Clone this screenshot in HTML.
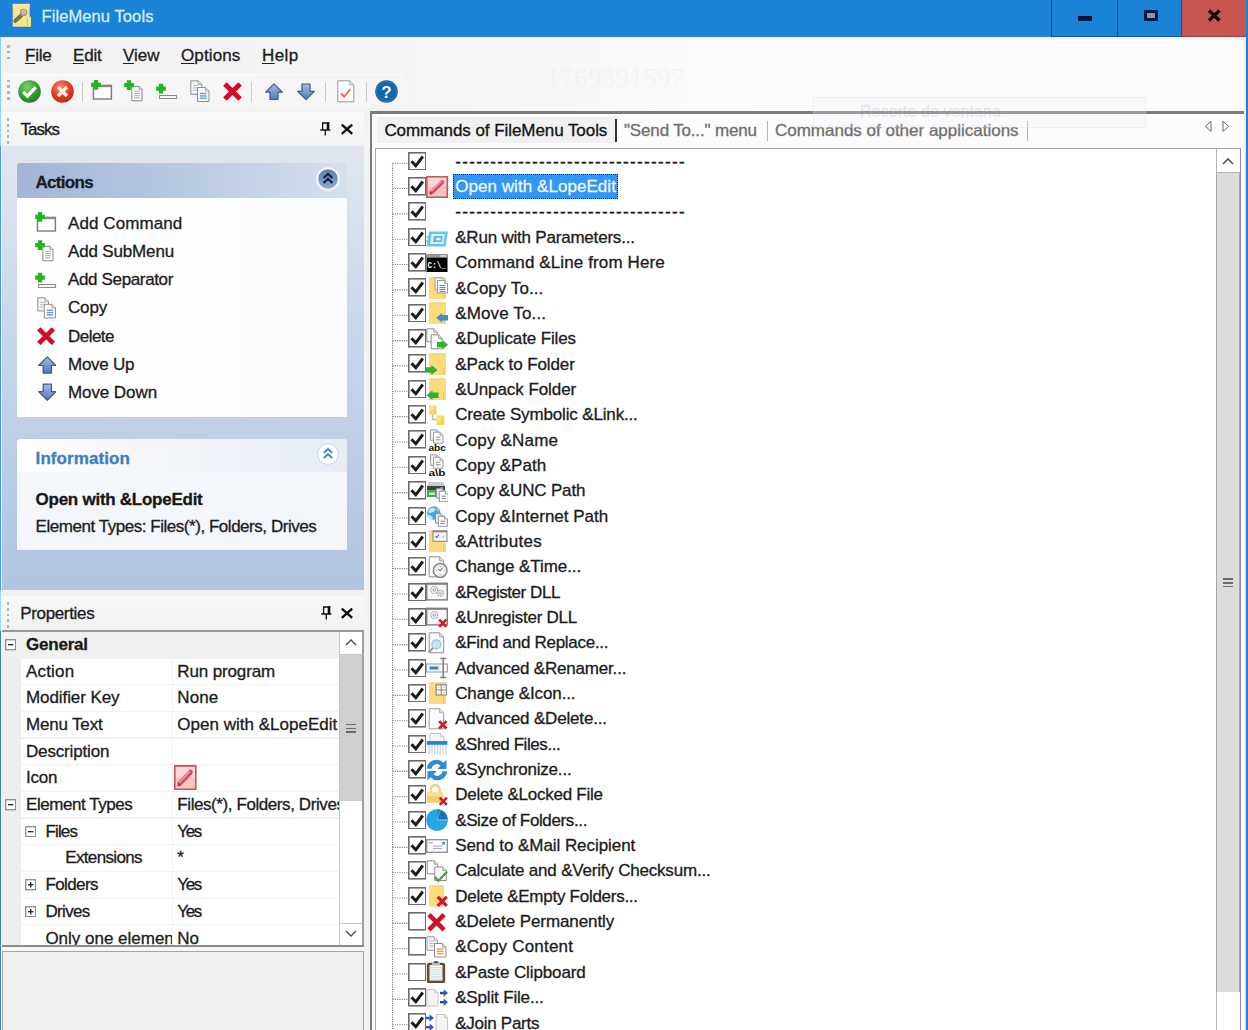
<!DOCTYPE html>
<html><head><meta charset="utf-8"><title>FileMenu Tools</title>
<style>
html,body{margin:0;padding:0;}
body{width:1248px;height:1030px;position:relative;overflow:hidden;background:#f3f3f3;font-family:"Liberation Sans",sans-serif;}
div,span.t,svg{position:absolute;}
span.t{white-space:pre;line-height:24px;height:24px;-webkit-text-stroke:0.3px currentColor;}
u{text-decoration:underline;text-underline-offset:2px;text-decoration-thickness:1.3px;}
</style></head><body>
<div style="left:0px;top:0px;width:1248px;height:37px;background:#1b83d7;"></div>
<div style="left:0px;top:37px;width:1248px;height:76px;background:linear-gradient(90deg,#f1f1f1 0%,#f4f4f4 30%,#fbfbfb 55%,#fcfcfc 100%);"></div>
<div style="left:0px;top:35.8px;width:1051px;height:1.2px;background:#3b82bf;"></div>
<div style="left:0px;top:37px;width:1248px;height:2.6px;background:linear-gradient(180deg,#d6e8f7,#fbfbfb 60%,#f6f6f6);"></div>
<div style="left:3px;top:72.5px;width:402px;height:38.3px;background:linear-gradient(180deg,#fafafa,#f6f6f6 12%,#f5f5f5 85%,#f0f0f0);border-radius:2px;"></div>
<div style="left:0px;top:37px;width:1.3px;height:75px;background:#8ccdf8;"></div>
<div style="left:0px;top:112px;width:1.3px;height:34px;background:#9ad3f9;"></div>
<div style="left:0px;top:145.5px;width:1.3px;height:444px;background:#3f9ae2;"></div>
<div style="left:0px;top:589.5px;width:1.3px;height:41px;background:#a3d6f9;"></div>
<div style="left:0px;top:630.5px;width:1.3px;height:400px;background:#3a85bf;"></div>
<div style="left:1246.2px;top:37px;width:1.8px;height:993px;background:#2382d6;"></div>
<div style="left:1243.7px;top:37px;width:2.5px;height:993px;background:linear-gradient(90deg,#f4f8fc,#cfe4f7);"></div>
<svg style="left:12px;top:3px;" width="20" height="25" viewBox="0 0 20 25" ><rect x="0.700" y="0.900" width="17" height="22.800" fill="#f7e48e"/><rect x="0.700" y="0.900" width="17" height="2" fill="#f1ea9e"/><rect x="1.500" y="3" width="6" height="9" fill="#fbe39a" opacity=".7"/><rect x="15.300" y="13.800" width="3.700" height="9.900" fill="#f3e690"/><rect x="14.900" y="13.800" width="1" height="9.900" fill="#d9c85e"/><path d="M3.400 17.800L9.300 12.400" stroke="#7a7046" stroke-width="4" stroke-linecap="round"/><circle cx="11.600" cy="9.400" r="3.700" fill="#a99a76"/><circle cx="11.900" cy="9.200" r="2.100" fill="#e6d6c6"/><circle cx="11.900" cy="9.300" r=".9" fill="#8a7f78"/></svg>
<span class="t" style="left:41.5px;top:4.40px;font-size:16.5px;letter-spacing:0.095px;color:#d6efff;">FileMenu Tools</span>
<div style="left:1051px;top:0px;width:1px;height:37px;background:#154a7c;"></div>
<div style="left:1117px;top:0px;width:1px;height:37px;background:#154a7c;"></div>
<div style="left:1181px;top:0px;width:1px;height:37px;background:#154a7c;"></div>
<div style="left:1052px;top:36px;width:130px;height:1px;background:#1a5c98;"></div>
<div style="left:1182px;top:0px;width:64px;height:37px;background:#c75650;"></div>
<div style="left:1182px;top:36px;width:64px;height:1px;background:#9c4440;"></div>
<div style="left:1246px;top:0px;width:2px;height:37px;background:#1b83d7;"></div>
<div style="left:1077.5px;top:16px;width:14px;height:4.6px;background:#06133a;"></div>
<div style="left:1143.5px;top:10px;width:14.5px;height:10.6px;background:#5fa6dd;border:3.200px solid #06133a;box-sizing:border-box;"></div>
<svg style="left:1207px;top:9px;" width="15" height="13" viewBox="0 0 15 13" ><path d="M2 1.500L12.500 11.500M12.500 1.500L2 11.500" stroke="#0a0a0a" stroke-width="3.300" fill="none"/></svg>
<div style="left:7.1px;top:44.8px;width:2.8px;height:2.8px;background:#b2b2b2;"></div>
<div style="left:7.1px;top:50.699999999999996px;width:2.8px;height:2.8px;background:#b2b2b2;"></div>
<div style="left:7.1px;top:56.599999999999994px;width:2.8px;height:2.8px;background:#b2b2b2;"></div>
<span class="t" style="left:25px;top:44.00px;font-size:17px;letter-spacing:-0.223px;color:#1b1b1b;"><u>F</u>ile</span>
<span class="t" style="left:73px;top:44.00px;font-size:17px;letter-spacing:-0.199px;color:#1b1b1b;"><u>E</u>dit</span>
<span class="t" style="left:123px;top:44.00px;font-size:17px;letter-spacing:-0.011px;color:#1b1b1b;"><u>V</u>iew</span>
<span class="t" style="left:181px;top:44.00px;font-size:17px;letter-spacing:0.130px;color:#1b1b1b;"><u>O</u>ptions</span>
<span class="t" style="left:262px;top:44.00px;font-size:17px;letter-spacing:0.384px;color:#1b1b1b;"><u>H</u>elp</span>
<span class="t" style="left:546px;top:66.00px;font-size:27px;letter-spacing:0.000px;color:rgba(190,190,190,.10);font-family:'Liberation Serif',serif;letter-spacing:0.4px;">1769391597</span>
<div style="left:7.1px;top:79.6px;width:2.8px;height:2.8px;background:#b2b2b2;"></div>
<div style="left:7.1px;top:85.39999999999999px;width:2.8px;height:2.8px;background:#b2b2b2;"></div>
<div style="left:7.1px;top:91.19999999999999px;width:2.8px;height:2.8px;background:#b2b2b2;"></div>
<div style="left:7.1px;top:97.0px;width:2.8px;height:2.8px;background:#b2b2b2;"></div>
<div style="left:81.5px;top:81.5px;width:1.3px;height:20px;background:#c9c9c9;"></div>
<div style="left:251.2px;top:81.5px;width:1.3px;height:20px;background:#c9c9c9;"></div>
<div style="left:325px;top:81.5px;width:1.3px;height:20px;background:#c9c9c9;"></div>
<div style="left:365.5px;top:81.5px;width:1.3px;height:20px;background:#c9c9c9;"></div>
<svg style="left:18px;top:79.5px;" width="23" height="23" viewBox="0 0 23 23" ><defs><radialGradient id="gg" cx=".4" cy=".3" r=".8"><stop offset="0" stop-color="#7ad66a"/><stop offset=".55" stop-color="#2f9e32"/><stop offset="1" stop-color="#1d7a25"/></radialGradient></defs><circle cx="11.500" cy="11.500" r="11.300" fill="url(#gg)"/><path d="M5.200 11.800l4.300 4.400 8.300-9" stroke="#fff" stroke-width="3.300" fill="none"/></svg>
<svg style="left:50.5px;top:79.5px;" width="23" height="23" viewBox="0 0 23 23" ><defs><radialGradient id="rg" cx=".4" cy=".3" r=".8"><stop offset="0" stop-color="#f58a6a"/><stop offset=".55" stop-color="#df3a1e"/><stop offset="1" stop-color="#b8260f"/></radialGradient></defs><circle cx="11.500" cy="11.500" r="11.300" fill="url(#rg)"/><path d="M7 7l9 9M16 7l-9 9" stroke="#fbe9e4" stroke-width="3.600" fill="none"/></svg>
<svg style="left:91.2px;top:80px;" width="22" height="20" viewBox="0 0 22 20" ><rect x="2.400" y="5.400" width="18" height="13.600" fill="#fdfdfd" stroke="#7b7b7b" stroke-width="1.400"/><rect x="2.400" y="5.400" width="18" height="1.800" fill="#8a8a8a"/><path d="M0.20000000000000018 4.95h9.7M5.05 0.10000000000000053v9.7" stroke="#22b522" stroke-width="4.3" fill="none"/></svg>
<svg style="left:123.8px;top:80.2px;" width="22" height="22" viewBox="0 0 22 22" ><path d="M7.8 6.3h7.199999999999999l3 3v11.5h-10.2z" fill="#fafafa" stroke="#8a8a8a" stroke-width="1"/><path d="M15.0 6.3v3h3" fill="#e4e4ee" stroke="#8a8a8a" stroke-width="0.8"/><path d="M10.2 11.3h5.5" stroke="#a8a8a8" stroke-width="1"/><path d="M10.2 13.5h5.5" stroke="#a8a8a8" stroke-width="1"/><path d="M10.2 15.700000000000001h5.5" stroke="#a8a8a8" stroke-width="1"/><path d="M10.2 17.900000000000002h5.5" stroke="#a8a8a8" stroke-width="1"/><path d="M0.15000000000000036 5.2h9.7M5 0.35000000000000053v9.7" stroke="#22b522" stroke-width="4.3" fill="none"/></svg>
<svg style="left:155.7px;top:83.2px;" width="22" height="17" viewBox="0 0 22 17" ><rect x="3.500" y="12.500" width="17.100" height="3" fill="#f4f4f4" stroke="#8a8a8a" stroke-width="1"/><path d="M0.15000000000000036 5.65h9.7M5 0.8000000000000007v9.7" stroke="#22b522" stroke-width="4.3" fill="none"/></svg>
<svg style="left:190px;top:80px;" width="20" height="23" viewBox="0 0 20 23" ><path d="M0.8 0.8h7.4l3.6 3.6v9.9h-11z" fill="#f4f5f8" stroke="#8d8d8d" stroke-width="1"/><path d="M8.200000000000001 0.8v3.6h3.6" fill="#e4e4ee" stroke="#8d8d8d" stroke-width="0.8"/><path d="M3 5.5h5" stroke="#b4bccb" stroke-width="1"/><path d="M3 7.9h5" stroke="#b4bccb" stroke-width="1"/><path d="M3 10.3h5" stroke="#b4bccb" stroke-width="1"/><path d="M7.5 7.5h7.9l3.6 3.6v10.4h-11.5z" fill="#fdfdfd" stroke="#8d8d8d" stroke-width="1"/><path d="M15.4 7.5v3.6h3.6" fill="#e4e4ee" stroke="#8d8d8d" stroke-width="0.8"/><path d="M10 13.5h6.5" stroke="#5b9bd8" stroke-width="1.4"/><path d="M10 15.9h6.5" stroke="#5b9bd8" stroke-width="1.4"/><path d="M10 18.3h6.5" stroke="#5b9bd8" stroke-width="1.4"/></svg>
<svg style="left:222.5px;top:81.5px;" width="19" height="19" viewBox="0 0 19 19" ><path d="M1.9000000000000004 1.9000000000000004L17.1 17.1M17.1 1.9000000000000004L1.9000000000000004 17.1" stroke="#d20a24" stroke-width="4.9" fill="none"/></svg>
<svg style="left:264.5px;top:82.5px;" width="18" height="18" viewBox="0 0 18 18" ><defs><linearGradient id="ug" x1="0" y1="0" x2="0" y2="1"><stop offset="0" stop-color="#a3bde6"/><stop offset="1" stop-color="#4f79ba"/></linearGradient></defs><path d="M9 0.800l8.400 8.400h-4.400v7.300h-8v-7.300h-4.400z" fill="url(#ug)" stroke="#3d5b8c" stroke-width="1.200" stroke-linejoin="round"/></svg>
<svg style="left:296.8px;top:82.8px;" width="18" height="18" viewBox="0 0 18 18" ><defs><linearGradient id="dg" x1="0" y1="0" x2="0" y2="1"><stop offset="0" stop-color="#a3bde6"/><stop offset="1" stop-color="#4f79ba"/></linearGradient></defs><path d="M9 16.700l8.400-8.400h-4.400v-7.300h-8v7.300h-4.400z" fill="url(#dg)" stroke="#3d5b8c" stroke-width="1.200" stroke-linejoin="round"/></svg>
<svg style="left:337px;top:80px;" width="18" height="23" viewBox="0 0 18 23" ><path d="M0.8 0.8h12l4 4v17h-16z" fill="#fbfbfb" stroke="#9a9a9a" stroke-width="1"/><path d="M12.8 0.8v4h4" fill="#e4e4ee" stroke="#9a9a9a" stroke-width="0.8"/><path d="M4 13.500l3.200 3.200 6-7.500" stroke="#e8643c" stroke-width="1.800" fill="none"/></svg>
<svg style="left:375px;top:79.5px;" width="23" height="23" viewBox="0 0 23 23" ><circle cx="11.500" cy="11.500" r="11.300" fill="#1565ae"/><circle cx="11.500" cy="11.500" r="10" fill="none" stroke="#2a7cc4" stroke-width="1"/><text x="11.500" y="17.500" text-anchor="middle" font-family="Liberation Sans,sans-serif" font-weight="bold" font-size="17" fill="#fff">?</text></svg>
<div style="left:2px;top:112px;width:361.7px;height:33.5px;background:linear-gradient(180deg,#fbfbfb,#f1f2f4);"></div>
<div style="left:6.7px;top:118.2px;width:2.8px;height:2.8px;background:#b2b2b2;"></div>
<div style="left:6.7px;top:123.95px;width:2.8px;height:2.8px;background:#b2b2b2;"></div>
<div style="left:6.7px;top:129.7px;width:2.8px;height:2.8px;background:#b2b2b2;"></div>
<div style="left:6.7px;top:135.45px;width:2.8px;height:2.8px;background:#b2b2b2;"></div>
<div style="left:6.7px;top:141.2px;width:2.8px;height:2.8px;background:#b2b2b2;"></div>
<span class="t" style="left:20.5px;top:117.50px;font-size:17px;letter-spacing:-0.991px;color:#1b1b1b;">Tasks</span>
<svg style="left:320px;top:121.6px;" width="11" height="14" viewBox="0 0 11 14" ><path d="M2 1h7.300M2.600 1v7M8 0.400v7.600M0.300 8h10M5.300 8v5.500" stroke="#0c0c0c" stroke-width="1.300" fill="none"/><path d="M8 0.400v7.600" stroke="#0c0c0c" stroke-width="2.600" fill="none"/></svg>
<svg style="left:341px;top:123.5px;" width="12" height="11" viewBox="0 0 12 11" ><path d="M0.800 0.600L11.200 9.800M11.200 0.600L0.800 9.800" stroke="#0c0c0c" stroke-width="2.300" fill="none"/></svg>
<div style="left:2px;top:145.5px;width:361.7px;height:444px;background:linear-gradient(180deg,#e0e6ee 0%,#d5dfec 22%,#c1d1e8 58%,#b0c5e1 100%);"></div>
<div style="left:16.6px;top:162.7px;width:330.4px;height:35.3px;background:linear-gradient(90deg,#a2b5d8 0%,#b8c9e3 50%,#d6e0ed 100%);border-radius:3px 3px 0 0;"></div>
<span class="t" style="left:35.5px;top:171.30px;font-size:17px;letter-spacing:-0.692px;color:#1c1c1c;font-weight:bold;">Actions</span>
<svg style="left:316.4px;top:166.7px;" width="24" height="24" viewBox="0 0 24 24" ><defs><linearGradient id="cg" x1="0" y1="0" x2="0" y2="1"><stop offset="0" stop-color="#5a7db2"/><stop offset="1" stop-color="#8eaad0"/></linearGradient></defs><circle cx="12" cy="12" r="11.800" fill="#f4f8fd"/><circle cx="12" cy="12" r="9.800" fill="url(#cg)"/><path d="M7.600 11l4.400-4.200 4.400 4.200M7.600 16l4.400-4.200 4.400 4.200" stroke="#0e1a33" stroke-width="1.900" fill="none"/></svg>
<div style="left:16.6px;top:198px;width:330.4px;height:219.3px;background:linear-gradient(90deg,#ffffff,#fbfcfe);"></div>
<span class="t" style="left:68px;top:211.90px;font-size:17px;letter-spacing:0.082px;color:#1b1b1b;">Add Command</span>
<span class="t" style="left:68px;top:240.08px;font-size:17px;letter-spacing:-0.159px;color:#1b1b1b;">Add SubMenu</span>
<span class="t" style="left:68px;top:268.26px;font-size:17px;letter-spacing:-0.356px;color:#1b1b1b;">Add Separator</span>
<span class="t" style="left:68px;top:296.44px;font-size:17px;letter-spacing:-0.172px;color:#1b1b1b;">Copy</span>
<span class="t" style="left:68px;top:324.62px;font-size:17px;letter-spacing:-0.524px;color:#1b1b1b;">Delete</span>
<span class="t" style="left:68px;top:352.80px;font-size:17px;letter-spacing:-0.247px;color:#1b1b1b;">Move Up</span>
<span class="t" style="left:68px;top:380.98px;font-size:17px;letter-spacing:-0.084px;color:#1b1b1b;">Move Down</span>
<svg style="left:35px;top:212px;" width="22" height="20" viewBox="0 0 22 20" ><rect x="2.400" y="5.400" width="18" height="13.600" fill="#fdfdfd" stroke="#7b7b7b" stroke-width="1.400"/><rect x="2.400" y="5.400" width="18" height="1.800" fill="#8a8a8a"/><path d="M0.20000000000000018 4.95h9.7M5.05 0.10000000000000053v9.7" stroke="#22b522" stroke-width="4.3" fill="none"/></svg>
<svg style="left:35px;top:240px;" width="22" height="22" viewBox="0 0 22 22" ><path d="M7.8 6.3h7.199999999999999l3 3v11.5h-10.2z" fill="#fafafa" stroke="#8a8a8a" stroke-width="1"/><path d="M15.0 6.3v3h3" fill="#e4e4ee" stroke="#8a8a8a" stroke-width="0.8"/><path d="M10.2 11.3h5.5" stroke="#a8a8a8" stroke-width="1"/><path d="M10.2 13.5h5.5" stroke="#a8a8a8" stroke-width="1"/><path d="M10.2 15.700000000000001h5.5" stroke="#a8a8a8" stroke-width="1"/><path d="M10.2 17.900000000000002h5.5" stroke="#a8a8a8" stroke-width="1"/><path d="M0.15000000000000036 5.2h9.7M5 0.35000000000000053v9.7" stroke="#22b522" stroke-width="4.3" fill="none"/></svg>
<svg style="left:35px;top:272px;" width="22" height="17" viewBox="0 0 22 17" ><rect x="3.500" y="12.500" width="17.100" height="3" fill="#f4f4f4" stroke="#8a8a8a" stroke-width="1"/><path d="M0.15000000000000036 5.65h9.7M5 0.8000000000000007v9.7" stroke="#22b522" stroke-width="4.3" fill="none"/></svg>
<svg style="left:36.5px;top:297px;" width="19.5" height="22.5" viewBox="0 0 20 23" ><path d="M0.8 0.8h7.4l3.6 3.6v9.9h-11z" fill="#f4f5f8" stroke="#8d8d8d" stroke-width="1"/><path d="M8.200000000000001 0.8v3.6h3.6" fill="#e4e4ee" stroke="#8d8d8d" stroke-width="0.8"/><path d="M3 5.5h5" stroke="#b4bccb" stroke-width="1"/><path d="M3 7.9h5" stroke="#b4bccb" stroke-width="1"/><path d="M3 10.3h5" stroke="#b4bccb" stroke-width="1"/><path d="M7.5 7.5h7.9l3.6 3.6v10.4h-11.5z" fill="#fdfdfd" stroke="#8d8d8d" stroke-width="1"/><path d="M15.4 7.5v3.6h3.6" fill="#e4e4ee" stroke="#8d8d8d" stroke-width="0.8"/><path d="M10 13.5h6.5" stroke="#5b9bd8" stroke-width="1.4"/><path d="M10 15.9h6.5" stroke="#5b9bd8" stroke-width="1.4"/><path d="M10 18.3h6.5" stroke="#5b9bd8" stroke-width="1.4"/></svg>
<svg style="left:37.3px;top:326.8px;" width="18.2" height="18.2" viewBox="0 0 19 19" ><path d="M1.9000000000000004 1.9000000000000004L17.1 17.1M17.1 1.9000000000000004L1.9000000000000004 17.1" stroke="#d20a24" stroke-width="4.9" fill="none"/></svg>
<svg style="left:37.6px;top:356px;" width="18.6" height="18.6" viewBox="0 0 18 18" ><defs><linearGradient id="ug2" x1="0" y1="0" x2="0" y2="1"><stop offset="0" stop-color="#a3bde6"/><stop offset="1" stop-color="#4f79ba"/></linearGradient></defs><path d="M9 0.800l8.400 8.400h-4.400v7.300h-8v-7.300h-4.400z" fill="url(#ug2)" stroke="#3d5b8c" stroke-width="1.200" stroke-linejoin="round"/></svg>
<svg style="left:37.6px;top:383.3px;" width="18.6" height="18.6" viewBox="0 0 18 18" ><defs><linearGradient id="dg2" x1="0" y1="0" x2="0" y2="1"><stop offset="0" stop-color="#a3bde6"/><stop offset="1" stop-color="#4f79ba"/></linearGradient></defs><path d="M9 16.700l8.400-8.400h-4.400v-7.300h-8v7.300h-4.400z" fill="url(#dg2)" stroke="#3d5b8c" stroke-width="1.200" stroke-linejoin="round"/></svg>
<div style="left:16.6px;top:438.8px;width:330.4px;height:34px;background:linear-gradient(90deg,#fdfeff 0%,#f3f6fa 40%,#e7edf5 100%);border-radius:3px 3px 0 0;"></div>
<span class="t" style="left:35.6px;top:447.20px;font-size:17px;letter-spacing:0.082px;color:#3d7fbf;font-weight:bold;">Information</span>
<svg style="left:317.4px;top:442.9px;" width="22" height="22" viewBox="0 0 22 22" ><circle cx="11" cy="11" r="10.300" fill="#fdfeff" stroke="#c9d6e8" stroke-width="1"/><path d="M6.800 10l4.200-4 4.200 4M6.800 15l4.200-4 4.200 4" stroke="#3f82c4" stroke-width="1.800" fill="none"/></svg>
<div style="left:16.6px;top:472.3px;width:330.4px;height:77.5px;background:#f3f6fb;"></div>
<span class="t" style="left:35.6px;top:488.00px;font-size:17px;letter-spacing:-0.262px;color:#161616;font-weight:bold;">Open with &amp;LopeEdit</span>
<span class="t" style="left:35.6px;top:514.80px;font-size:17px;letter-spacing:-0.462px;color:#1b1b1b;">Element Types: Files(*), Folders, Drives</span>
<div style="left:2px;top:589.5px;width:361px;height:6.5px;background:#eef0f3;"></div>
<div style="left:2px;top:596px;width:361px;height:35px;background:linear-gradient(180deg,#f8f8f8,#f1f1f1);"></div>
<div style="left:6.7px;top:602.2px;width:2.8px;height:2.8px;background:#b2b2b2;"></div>
<div style="left:6.7px;top:607.95px;width:2.8px;height:2.8px;background:#b2b2b2;"></div>
<div style="left:6.7px;top:613.7px;width:2.8px;height:2.8px;background:#b2b2b2;"></div>
<div style="left:6.7px;top:619.45px;width:2.8px;height:2.8px;background:#b2b2b2;"></div>
<div style="left:6.7px;top:625.2px;width:2.8px;height:2.8px;background:#b2b2b2;"></div>
<span class="t" style="left:20.2px;top:601.90px;font-size:17px;letter-spacing:-0.338px;color:#1b1b1b;">Properties</span>
<svg style="left:320.7px;top:605.6px;" width="11" height="14" viewBox="0 0 11 14" ><path d="M2 1h7.300M2.600 1v7M8 0.400v7.600M0.300 8h10M5.300 8v5.500" stroke="#0c0c0c" stroke-width="1.300" fill="none"/><path d="M8 0.400v7.600" stroke="#0c0c0c" stroke-width="2.600" fill="none"/></svg>
<svg style="left:341px;top:607.5px;" width="12" height="11" viewBox="0 0 12 11" ><path d="M0.800 0.600L11.200 9.800M11.200 0.600L0.800 9.800" stroke="#0c0c0c" stroke-width="2.300" fill="none"/></svg>
<div style="left:2px;top:630.2px;width:361.5px;height:1.4px;background:#989898;"></div>
<div style="left:2px;top:631.5px;width:336.5px;height:314px;background:#fff;"></div>
<div style="left:2px;top:631.5px;width:19px;height:314px;background:#eeeeee;"></div>
<div style="left:2px;top:631.5px;width:336.5px;height:26.17px;background:#f0f0f0;"></div>
<div style="left:21px;top:657.4699999999999px;width:317.5px;height:1.2px;background:#f2f2f2;"></div>
<div style="left:21px;top:684.14px;width:317.5px;height:1.2px;background:#f2f2f2;"></div>
<div style="left:21px;top:710.81px;width:317.5px;height:1.2px;background:#f2f2f2;"></div>
<div style="left:21px;top:737.48px;width:317.5px;height:1.2px;background:#f2f2f2;"></div>
<div style="left:21px;top:764.15px;width:317.5px;height:1.2px;background:#f2f2f2;"></div>
<div style="left:21px;top:790.8199999999999px;width:317.5px;height:1.2px;background:#f2f2f2;"></div>
<div style="left:21px;top:817.49px;width:317.5px;height:1.2px;background:#f2f2f2;"></div>
<div style="left:21px;top:844.16px;width:317.5px;height:1.2px;background:#f2f2f2;"></div>
<div style="left:21px;top:870.8299999999999px;width:317.5px;height:1.2px;background:#f2f2f2;"></div>
<div style="left:21px;top:897.5px;width:317.5px;height:1.2px;background:#f2f2f2;"></div>
<div style="left:21px;top:924.17px;width:317.5px;height:1.2px;background:#f2f2f2;"></div>
<div style="left:171.5px;top:658.17px;width:1.2px;height:286.83px;background:#f2f2f2;"></div>
<span class="t" style="left:26px;top:633.10px;font-size:17px;letter-spacing:-0.216px;color:#1b1b1b;font-weight:bold;">General</span>
<span class="t" style="left:26px;top:659.77px;font-size:17px;letter-spacing:0.175px;color:#1b1b1b;">Action</span>
<span class="t" style="left:177.3px;top:659.77px;font-size:17px;letter-spacing:-0.138px;color:#1b1b1b;">Run program</span>
<span class="t" style="left:26px;top:686.44px;font-size:17px;letter-spacing:-0.082px;color:#1b1b1b;">Modifier Key</span>
<span class="t" style="left:177.3px;top:686.44px;font-size:17px;letter-spacing:0.090px;color:#1b1b1b;">None</span>
<span class="t" style="left:26px;top:713.11px;font-size:17px;letter-spacing:-0.180px;color:#1b1b1b;">Menu Text</span>
<span class="t" style="left:177.3px;top:713.11px;font-size:17px;letter-spacing:0.015px;color:#1b1b1b;">Open with &amp;LopeEdit</span>
<span class="t" style="left:26px;top:739.78px;font-size:17px;letter-spacing:-0.158px;color:#1b1b1b;">Description</span>
<span class="t" style="left:26px;top:766.45px;font-size:17px;letter-spacing:-0.208px;color:#1b1b1b;">Icon</span>
<span class="t" style="left:26px;top:793.12px;font-size:17px;letter-spacing:-0.449px;color:#1b1b1b;">Element Types</span>
<div style="left:173px;top:791.52px;width:165.500px;height:26.67px;overflow:hidden;">
<span class="t" style="left:4.300000000000011px;top:1.60px;font-size:17px;letter-spacing:-0.415px;color:#1b1b1b;">Files(*), Folders, Drives</span>
</div>
<span class="t" style="left:45.4px;top:819.79px;font-size:17px;letter-spacing:-0.819px;color:#1b1b1b;">Files</span>
<span class="t" style="left:177.3px;top:819.79px;font-size:17px;letter-spacing:-1.345px;color:#1b1b1b;">Yes</span>
<span class="t" style="left:65.2px;top:846.46px;font-size:17px;letter-spacing:-0.636px;color:#1b1b1b;">Extensions</span>
<span class="t" style="left:177.3px;top:846.46px;font-size:17px;letter-spacing:0.085px;color:#1b1b1b;">*</span>
<span class="t" style="left:45.4px;top:873.13px;font-size:17px;letter-spacing:-0.584px;color:#1b1b1b;">Folders</span>
<span class="t" style="left:177.3px;top:873.13px;font-size:17px;letter-spacing:-1.345px;color:#1b1b1b;">Yes</span>
<span class="t" style="left:45.4px;top:899.80px;font-size:17px;letter-spacing:-0.645px;color:#1b1b1b;">Drives</span>
<span class="t" style="left:177.3px;top:899.80px;font-size:17px;letter-spacing:-1.345px;color:#1b1b1b;">Yes</span>
<div style="left:21px;top:924.87px;width:150.500px;height:20.93px;overflow:hidden;">
<span class="t" style="left:24.4px;top:2.60px;font-size:17px;letter-spacing:-0.009px;color:#1b1b1b;">Only one element</span>
</div>
<div style="left:173px;top:924.87px;width:165px;height:20.93px;overflow:hidden;">
<span class="t" style="left:4.300000000000011px;top:2.60px;font-size:17px;letter-spacing:-0.116px;color:#1b1b1b;">No</span>
</div>
<svg style="left:4.999999999999999px;top:639.3px;" width="11.4" height="11.4" viewBox="0 0 11.4 11.4" ><rect x="0.700" y="0.700" width="10" height="10" fill="#fff" stroke="#8a8a8a" stroke-width="1.300"/><path d="M3 5.700h5.400" stroke="#222" stroke-width="1.300"/></svg>
<svg style="left:4.999999999999999px;top:799.3199999999999px;" width="11.4" height="11.4" viewBox="0 0 11.4 11.4" ><rect x="0.700" y="0.700" width="10" height="10" fill="#fff" stroke="#8a8a8a" stroke-width="1.300"/><path d="M3 5.700h5.400" stroke="#222" stroke-width="1.300"/></svg>
<svg style="left:24.7px;top:825.99px;" width="11.4" height="11.4" viewBox="0 0 11.4 11.4" ><rect x="0.700" y="0.700" width="10" height="10" fill="#fff" stroke="#8a8a8a" stroke-width="1.300"/><path d="M3 5.700h5.400" stroke="#222" stroke-width="1.300"/></svg>
<svg style="left:24.7px;top:879.3299999999999px;" width="11.4" height="11.4" viewBox="0 0 11.4 11.4" ><rect x="0.700" y="0.700" width="10" height="10" fill="#fff" stroke="#8a8a8a" stroke-width="1.300"/><path d="M3 5.700h5.400" stroke="#222" stroke-width="1.300"/><path d="M5.700 3v5.400" stroke="#222" stroke-width="1.300"/></svg>
<svg style="left:24.7px;top:906.0px;" width="11.4" height="11.4" viewBox="0 0 11.4 11.4" ><rect x="0.700" y="0.700" width="10" height="10" fill="#fff" stroke="#8a8a8a" stroke-width="1.300"/><path d="M3 5.700h5.400" stroke="#222" stroke-width="1.300"/><path d="M5.700 3v5.400" stroke="#222" stroke-width="1.300"/></svg>
<svg style="left:174.3px;top:765.2px;" width="22.6" height="25.3" viewBox="0 0 22 22" preserveAspectRatio="none"><rect x="0.800" y="0.800" width="20.400" height="20.400" fill="#f7c4c4" stroke="#c4585a" stroke-width="1.600"/><rect x="1.800" y="1.800" width="18.400" height="9" fill="#fbdcdc" opacity="0.750"/><path d="M5.600 16.200L16.200 6.200" stroke="#dc4a62" stroke-width="4.300" stroke-linecap="round"/><path d="M5.600 14.800L15 6" stroke="#f29aa6" stroke-width="1.500" stroke-linecap="round"/><path d="M3.200 18.800l1.200-3.200 2.200 2.200z" fill="#8c3848"/></svg>
<div style="left:338.5px;top:631.5px;width:25px;height:314px;background:#fff;"></div>
<div style="left:339.3px;top:631.5px;width:1.2px;height:314px;background:#c4c4c4;"></div>
<div style="left:361.9px;top:631.5px;width:1.7px;height:314px;background:#9e9e9e;"></div>
<div style="left:339.3px;top:654.3px;width:24px;height:1.1px;background:#c4c4c4;"></div>
<div style="left:339.3px;top:922.8px;width:24px;height:1.1px;background:#c4c4c4;"></div>
<div style="left:339.5px;top:655px;width:23px;height:146.3px;background:#cfcfcf;border-right:1.300px solid #a6a6a6;box-sizing:border-box;"></div>
<svg style="left:343px;top:636px;" width="16" height="12" viewBox="0 0 16 12" ><path d="M3 9l5-5 5 5" stroke="#555" stroke-width="1.500" fill="none"/></svg>
<svg style="left:343px;top:928px;" width="16" height="12" viewBox="0 0 16 12" ><path d="M3 3l5 5 5-5" stroke="#555" stroke-width="1.500" fill="none"/></svg>
<div style="left:346px;top:723.7px;width:9.5px;height:1.6px;background:#6a6a6a;"></div>
<div style="left:346px;top:727.5px;width:9.5px;height:1.6px;background:#6a6a6a;"></div>
<div style="left:346px;top:731.3000000000001px;width:9.5px;height:1.6px;background:#6a6a6a;"></div>
<div style="left:2px;top:945px;width:361.5px;height:1.5px;background:#8c8c8c;"></div>
<div style="left:2px;top:946.5px;width:361.5px;height:4.8px;background:#f6f6f6;"></div>
<div style="left:2px;top:951.3px;width:361.7px;height:80px;background:#f0f0f0;border:1.500px solid #a6a6a6;box-sizing:border-box;"></div>
<div style="left:363.5px;top:112px;width:7.5px;height:918px;background:#f2f3f5;"></div>
<div style="left:371px;top:112px;width:873px;height:918px;background:#fcfcfc;"></div>
<div style="left:370.2px;top:111.3px;width:873.5px;height:2.5px;background:#7c7c7c;"></div>
<div style="left:370.2px;top:111.3px;width:2.3px;height:919px;background:#7c7c7c;"></div>
<div style="left:377px;top:117px;width:238.5px;height:26px;background:#f1f1f1;"></div>
<span class="t" style="left:384.4px;top:118.50px;font-size:17px;letter-spacing:-0.064px;color:#111;">Commands of FileMenu Tools</span>
<div style="left:615.3px;top:118.5px;width:1.6px;height:23px;background:#333;"></div>
<span class="t" style="left:624px;top:118.50px;font-size:17px;letter-spacing:-0.163px;color:#6e6e6e;">&quot;Send To...&quot; menu</span>
<div style="left:766.5px;top:120.5px;width:1.2px;height:20px;background:#b5b5b5;"></div>
<span class="t" style="left:775px;top:118.50px;font-size:17px;letter-spacing:-0.007px;color:#6e6e6e;">Commands of other applications</span>
<div style="left:1026.5px;top:120.5px;width:1.2px;height:20px;background:#b5b5b5;"></div>
<svg style="left:1201.5px;top:120.2px;" width="30" height="13" viewBox="0 0 30 13" ><path d="M9 1.200v10.200l-5.600-5.100z" fill="#fff" stroke="#6a6a6a" stroke-width="1"/><path d="M21 1.200v10.200l5.600-5.100z" fill="#fff" stroke="#6a6a6a" stroke-width="1"/></svg>
<div style="left:813px;top:97px;width:333px;height:31px;border:1px solid rgba(170,200,225,.16);background:rgba(235,245,252,.25);box-sizing:border-box;"></div>
<span class="t" style="left:860px;top:100.00px;font-size:16px;letter-spacing:0.075px;color:rgba(120,120,120,.14);">Recorte de ventana</span>
<div style="left:375.2px;top:148px;width:866px;height:885px;background:#fff;border:1.500px solid #a8a8a8;box-sizing:border-box;"></div>
<div style="left:1215.6px;top:149px;width:24px;height:881px;background:#fff;"></div>
<div style="left:1215.6px;top:149px;width:1.3px;height:881px;background:#b5b5b5;"></div>
<div style="left:1215.6px;top:172.3px;width:24px;height:1.2px;background:#b5b5b5;"></div>
<div style="left:1215.6px;top:173px;width:24px;height:818.5px;background:#dcdcdc;border-left:1.400px solid #a9a9a9;border-right:1.400px solid #a9a9a9;box-sizing:border-box;"></div>
<svg style="left:1219.6px;top:155px;" width="16" height="12" viewBox="0 0 16 12" ><path d="M3 9l5-5 5 5" stroke="#555" stroke-width="1.600" fill="none"/></svg>
<div style="left:1222.5px;top:578.3px;width:10px;height:1.6px;background:#6a6a6a;"></div>
<div style="left:1222.5px;top:582.0px;width:10px;height:1.6px;background:#6a6a6a;"></div>
<div style="left:1222.5px;top:585.6999999999999px;width:10px;height:1.6px;background:#6a6a6a;"></div>
<div style="left:1239.6px;top:149px;width:1.4px;height:881px;background:#8e8e8e;"></div>
<svg style="left:388px;top:161.15px" width="22" height="868.85" viewBox="0 0 22 868.85"><path d="M4.500 2.200V868.85" stroke="#787878" stroke-width="1.100" stroke-dasharray="1.100 1.200" fill="none"/><path d="M4.500 2.20H20" stroke="#787878" stroke-width="1.100" stroke-dasharray="1.100 1.200" fill="none"/><path d="M4.500 27.54H20" stroke="#787878" stroke-width="1.100" stroke-dasharray="1.100 1.200" fill="none"/><path d="M4.500 52.88H20" stroke="#787878" stroke-width="1.100" stroke-dasharray="1.100 1.200" fill="none"/><path d="M4.500 78.22H20" stroke="#787878" stroke-width="1.100" stroke-dasharray="1.100 1.200" fill="none"/><path d="M4.500 103.56H20" stroke="#787878" stroke-width="1.100" stroke-dasharray="1.100 1.200" fill="none"/><path d="M4.500 128.90H20" stroke="#787878" stroke-width="1.100" stroke-dasharray="1.100 1.200" fill="none"/><path d="M4.500 154.24H20" stroke="#787878" stroke-width="1.100" stroke-dasharray="1.100 1.200" fill="none"/><path d="M4.500 179.58H20" stroke="#787878" stroke-width="1.100" stroke-dasharray="1.100 1.200" fill="none"/><path d="M4.500 204.92H20" stroke="#787878" stroke-width="1.100" stroke-dasharray="1.100 1.200" fill="none"/><path d="M4.500 230.26H20" stroke="#787878" stroke-width="1.100" stroke-dasharray="1.100 1.200" fill="none"/><path d="M4.500 255.60H20" stroke="#787878" stroke-width="1.100" stroke-dasharray="1.100 1.200" fill="none"/><path d="M4.500 280.94H20" stroke="#787878" stroke-width="1.100" stroke-dasharray="1.100 1.200" fill="none"/><path d="M4.500 306.28H20" stroke="#787878" stroke-width="1.100" stroke-dasharray="1.100 1.200" fill="none"/><path d="M4.500 331.62H20" stroke="#787878" stroke-width="1.100" stroke-dasharray="1.100 1.200" fill="none"/><path d="M4.500 356.96H20" stroke="#787878" stroke-width="1.100" stroke-dasharray="1.100 1.200" fill="none"/><path d="M4.500 382.30H20" stroke="#787878" stroke-width="1.100" stroke-dasharray="1.100 1.200" fill="none"/><path d="M4.500 407.64H20" stroke="#787878" stroke-width="1.100" stroke-dasharray="1.100 1.200" fill="none"/><path d="M4.500 432.98H20" stroke="#787878" stroke-width="1.100" stroke-dasharray="1.100 1.200" fill="none"/><path d="M4.500 458.32H20" stroke="#787878" stroke-width="1.100" stroke-dasharray="1.100 1.200" fill="none"/><path d="M4.500 483.66H20" stroke="#787878" stroke-width="1.100" stroke-dasharray="1.100 1.200" fill="none"/><path d="M4.500 509.00H20" stroke="#787878" stroke-width="1.100" stroke-dasharray="1.100 1.200" fill="none"/><path d="M4.500 534.34H20" stroke="#787878" stroke-width="1.100" stroke-dasharray="1.100 1.200" fill="none"/><path d="M4.500 559.68H20" stroke="#787878" stroke-width="1.100" stroke-dasharray="1.100 1.200" fill="none"/><path d="M4.500 585.02H20" stroke="#787878" stroke-width="1.100" stroke-dasharray="1.100 1.200" fill="none"/><path d="M4.500 610.36H20" stroke="#787878" stroke-width="1.100" stroke-dasharray="1.100 1.200" fill="none"/><path d="M4.500 635.70H20" stroke="#787878" stroke-width="1.100" stroke-dasharray="1.100 1.200" fill="none"/><path d="M4.500 661.04H20" stroke="#787878" stroke-width="1.100" stroke-dasharray="1.100 1.200" fill="none"/><path d="M4.500 686.38H20" stroke="#787878" stroke-width="1.100" stroke-dasharray="1.100 1.200" fill="none"/><path d="M4.500 711.72H20" stroke="#787878" stroke-width="1.100" stroke-dasharray="1.100 1.200" fill="none"/><path d="M4.500 737.06H20" stroke="#787878" stroke-width="1.100" stroke-dasharray="1.100 1.200" fill="none"/><path d="M4.500 762.40H20" stroke="#787878" stroke-width="1.100" stroke-dasharray="1.100 1.200" fill="none"/><path d="M4.500 787.74H20" stroke="#787878" stroke-width="1.100" stroke-dasharray="1.100 1.200" fill="none"/><path d="M4.500 813.08H20" stroke="#787878" stroke-width="1.100" stroke-dasharray="1.100 1.200" fill="none"/><path d="M4.500 838.42H20" stroke="#787878" stroke-width="1.100" stroke-dasharray="1.100 1.200" fill="none"/><path d="M4.500 863.76H20" stroke="#787878" stroke-width="1.100" stroke-dasharray="1.100 1.200" fill="none"/></svg>
<svg style="left:407.6px;top:151.75px;" width="18.6" height="18.6" viewBox="0 0 18.6 18.6" ><rect x="0.800" y="0.800" width="17" height="17" fill="#fff" stroke="#6c6c6c" stroke-width="1.600"/><path d="M3.500 9.300L7.800 13.800L14.800 4.500" stroke="#1c1c1c" stroke-width="3" fill="none"/></svg>
<span class="t" style="left:455.2px;top:149.75px;font-size:17px;letter-spacing:1.332px;color:#1b1b1b;">---------------------------------</span>
<svg style="left:407.6px;top:177.09px;" width="18.6" height="18.6" viewBox="0 0 18.6 18.6" ><rect x="0.800" y="0.800" width="17" height="17" fill="#fff" stroke="#6c6c6c" stroke-width="1.600"/><path d="M3.500 9.300L7.800 13.800L14.800 4.500" stroke="#1c1c1c" stroke-width="3" fill="none"/></svg>
<svg style="left:426px;top:175.69px;" width="22" height="22" viewBox="0 0 22 22" ><rect x="0.800" y="0.800" width="20.400" height="20.400" fill="#f7c4c4" stroke="#c4585a" stroke-width="1.600"/><rect x="1.800" y="1.800" width="18.400" height="9" fill="#fbdcdc" opacity="0.750"/><path d="M5.600 16.200L16.200 6.200" stroke="#dc4a62" stroke-width="4.300" stroke-linecap="round"/><path d="M5.600 14.800L15 6" stroke="#f29aa6" stroke-width="1.500" stroke-linecap="round"/><path d="M3.200 18.800l1.200-3.200 2.200 2.200z" fill="#8c3848"/></svg>
<div style="left:452.6px;top:174.19px;width:165.6px;height:25.2px;background:#3396f5;border:1.300px dotted #0d2d52;box-sizing:border-box;"></div>
<span class="t" style="left:455.2px;top:175.29px;font-size:17px;letter-spacing:0.057px;color:#eef7ff;">Open with &amp;LopeEdit</span>
<svg style="left:407.6px;top:202.43px;" width="18.6" height="18.6" viewBox="0 0 18.6 18.6" ><rect x="0.800" y="0.800" width="17" height="17" fill="#fff" stroke="#6c6c6c" stroke-width="1.600"/><path d="M3.500 9.300L7.800 13.800L14.800 4.500" stroke="#1c1c1c" stroke-width="3" fill="none"/></svg>
<span class="t" style="left:455.2px;top:200.43px;font-size:17px;letter-spacing:1.332px;color:#1b1b1b;">---------------------------------</span>
<svg style="left:407.6px;top:227.77px;" width="18.6" height="18.6" viewBox="0 0 18.6 18.6" ><rect x="0.800" y="0.800" width="17" height="17" fill="#fff" stroke="#6c6c6c" stroke-width="1.600"/><path d="M3.500 9.300L7.800 13.800L14.800 4.500" stroke="#1c1c1c" stroke-width="3" fill="none"/></svg>
<svg style="left:426px;top:226.37px;" width="22" height="22" viewBox="0 0 22 22" ><path d="M3 5.5h19l-2.5 15h-19z" fill="#6dc3f0"/><path d="M5.6 8h13.3l-1.6 10h-13.3z" fill="#d9f1fc"/><path d="M8 10h8.8l-1 6h-8.8z" fill="#5ab5ea"/><path d="M10.4 11.8h4.4l-0.4 2.4h-4.4z" fill="#e8f7fe"/><path d="M0.5 10.5l2 .3-.3 1.6M0 15l2 .3-.3 1.6" stroke="#6dc3f0" stroke-width="1.3" fill="none"/></svg>
<span class="t" style="left:455.2px;top:225.97px;font-size:17px;letter-spacing:-0.206px;color:#1b1b1b;">&amp;Run with Parameters...</span>
<svg style="left:407.6px;top:253.10999999999999px;" width="18.6" height="18.6" viewBox="0 0 18.6 18.6" ><rect x="0.800" y="0.800" width="17" height="17" fill="#fff" stroke="#6c6c6c" stroke-width="1.600"/><path d="M3.500 9.300L7.800 13.800L14.800 4.500" stroke="#1c1c1c" stroke-width="3" fill="none"/></svg>
<svg style="left:426px;top:251.70999999999998px;" width="22" height="22" viewBox="0 0 22 22" ><rect x="0.5" y="2.5" width="21" height="17.5" fill="#000"/><rect x="0.5" y="2.5" width="21" height="3.2" fill="#9c9c9c"/><rect x="14" y="3.2" width="6.5" height="1.6" fill="#d8d8d8"/><text x="1.6" y="16" font-family="Liberation Mono,monospace" font-weight="bold" font-size="9.4" fill="#fff" textLength="18.5" lengthAdjust="spacingAndGlyphs">C:\_</text></svg>
<span class="t" style="left:455.2px;top:251.31px;font-size:17px;letter-spacing:0.121px;color:#1b1b1b;">Command &amp;Line from Here</span>
<svg style="left:407.6px;top:278.45000000000005px;" width="18.6" height="18.6" viewBox="0 0 18.6 18.6" ><rect x="0.800" y="0.800" width="17" height="17" fill="#fff" stroke="#6c6c6c" stroke-width="1.600"/><path d="M3.500 9.300L7.800 13.800L14.800 4.500" stroke="#1c1c1c" stroke-width="3" fill="none"/></svg>
<svg style="left:426px;top:277.05px;" width="22" height="22" viewBox="0 0 22 22" ><rect x="3" y="0.5" width="17" height="21.5" fill="#fbdb7b"/><rect x="17" y="13.83" width="1.4" height="8.17" fill="#f3c85a"/><rect x="3" y="0.5" width="17" height="1" fill="#f6cf63"/><path d="M9 0.8h7l3 3v9h-10z" fill="#f4f6fa" stroke="#9a9a9a" stroke-width="1"/><path d="M16 0.8v3h3" fill="#e4e4ee" stroke="#9a9a9a" stroke-width="0.8"/><path d="M11.5 3.5h7l3 3v9.5h-10z" fill="#fbfcff" stroke="#8e98a8" stroke-width="1"/><path d="M18.5 3.5v3h3" fill="#e4e4ee" stroke="#8e98a8" stroke-width="0.8"/><path d="M13.5 8.5h6" stroke="#5c86c4" stroke-width="1.1"/><path d="M13.5 10.5h6" stroke="#5c86c4" stroke-width="1.1"/><path d="M13.5 12.5h6" stroke="#5c86c4" stroke-width="1.1"/><path d="M13.5 14.5h6" stroke="#5c86c4" stroke-width="1.1"/></svg>
<span class="t" style="left:455.2px;top:276.65px;font-size:17px;letter-spacing:0.039px;color:#1b1b1b;">&amp;Copy To...</span>
<svg style="left:407.6px;top:303.79px;" width="18.6" height="18.6" viewBox="0 0 18.6 18.6" ><rect x="0.800" y="0.800" width="17" height="17" fill="#fff" stroke="#6c6c6c" stroke-width="1.600"/><path d="M3.500 9.300L7.800 13.800L14.800 4.500" stroke="#1c1c1c" stroke-width="3" fill="none"/></svg>
<svg style="left:426px;top:302.39px;" width="22" height="22" viewBox="0 0 22 22" ><rect x="3" y="0.5" width="17" height="21.5" fill="#fbdb7b"/><rect x="17" y="13.83" width="1.4" height="8.17" fill="#f3c85a"/><rect x="3" y="0.5" width="17" height="1" fill="#f6cf63"/><path d="M22 13.09h-6.0v-2.09l-6.0 4.75l6.0 4.75v-2.09h6.0z" fill="#3f8fd0"/></svg>
<span class="t" style="left:455.2px;top:301.99px;font-size:17px;letter-spacing:0.141px;color:#1b1b1b;">&amp;Move To...</span>
<svg style="left:407.6px;top:329.13px;" width="18.6" height="18.6" viewBox="0 0 18.6 18.6" ><rect x="0.800" y="0.800" width="17" height="17" fill="#fff" stroke="#6c6c6c" stroke-width="1.600"/><path d="M3.500 9.300L7.800 13.800L14.800 4.500" stroke="#1c1c1c" stroke-width="3" fill="none"/></svg>
<svg style="left:426px;top:327.72999999999996px;" width="22" height="22" viewBox="0 0 22 22" ><path d="M0.8 0.8h7.1l3.4 3.4v9.6h-10.5z" fill="#fafafa" stroke="#8d8d8d" stroke-width="1"/><path d="M7.9 0.8v3.4h3.4" fill="#e4e4ee" stroke="#8d8d8d" stroke-width="0.8"/><path d="M5.2 6.8h7.4l3.6 3.6v10.4h-11z" fill="#fdfdfd" stroke="#8d8d8d" stroke-width="1"/><path d="M12.6 6.8v3.6h3.6" fill="#e4e4ee" stroke="#8d8d8d" stroke-width="0.8"/><path d="M11 14.09h5.5v-2.09l5.5 4.75l-5.5 4.75v-2.09h-5.5z" fill="#2fb02f"/></svg>
<span class="t" style="left:455.2px;top:327.33px;font-size:17px;letter-spacing:-0.133px;color:#1b1b1b;">&amp;Duplicate Files</span>
<svg style="left:407.6px;top:354.47px;" width="18.6" height="18.6" viewBox="0 0 18.6 18.6" ><rect x="0.800" y="0.800" width="17" height="17" fill="#fff" stroke="#6c6c6c" stroke-width="1.600"/><path d="M3.500 9.300L7.800 13.800L14.800 4.500" stroke="#1c1c1c" stroke-width="3" fill="none"/></svg>
<svg style="left:426px;top:353.07px;" width="22" height="22" viewBox="0 0 22 22" ><rect x="3" y="0.5" width="17" height="21.5" fill="#fbdb7b"/><rect x="17" y="13.83" width="1.4" height="8.17" fill="#f3c85a"/><rect x="3" y="0.5" width="17" height="1" fill="#f6cf63"/><path d="M-1 14.2h6.25v-2.1999999999999997l6.25 5.0l-6.25 5.0v-2.1999999999999997h-6.25z" fill="#2fb02f"/></svg>
<span class="t" style="left:455.2px;top:352.67px;font-size:17px;letter-spacing:-0.090px;color:#1b1b1b;">&amp;Pack to Folder</span>
<svg style="left:407.6px;top:379.81000000000006px;" width="18.6" height="18.6" viewBox="0 0 18.6 18.6" ><rect x="0.800" y="0.800" width="17" height="17" fill="#fff" stroke="#6c6c6c" stroke-width="1.600"/><path d="M3.500 9.300L7.800 13.800L14.800 4.500" stroke="#1c1c1c" stroke-width="3" fill="none"/></svg>
<svg style="left:426px;top:378.41px;" width="22" height="22" viewBox="0 0 22 22" ><rect x="3" y="0.5" width="17" height="21.5" fill="#fbdb7b"/><rect x="17" y="13.83" width="1.4" height="8.17" fill="#f3c85a"/><rect x="3" y="0.5" width="17" height="1" fill="#f6cf63"/><path d="M12.5 14.456000000000003h-6.0v-2.1559999999999997l-6.0 4.9l6.0 4.9v-2.1559999999999997h6.0z" fill="#2fb02f"/></svg>
<span class="t" style="left:455.2px;top:378.01px;font-size:17px;letter-spacing:-0.064px;color:#1b1b1b;">&amp;Unpack Folder</span>
<svg style="left:407.6px;top:405.15000000000003px;" width="18.6" height="18.6" viewBox="0 0 18.6 18.6" ><rect x="0.800" y="0.800" width="17" height="17" fill="#fff" stroke="#6c6c6c" stroke-width="1.600"/><path d="M3.500 9.300L7.800 13.800L14.800 4.500" stroke="#1c1c1c" stroke-width="3" fill="none"/></svg>
<svg style="left:426px;top:403.75px;" width="22" height="22" viewBox="0 0 22 22" ><path d="M6.5 9v6.5h5" stroke="#b9b9b9" stroke-width="1.4" fill="none"/><rect x="3" y="1.5" width="7.5" height="9" fill="#f5d66a"/><rect x="3" y="1.5" width="4" height="5" fill="#f9e18d"/><rect x="8.2" y="6" width="1.2" height="4.5" fill="#eec650"/><rect x="10.5" y="11.5" width="8" height="9.5" fill="#f0dc62"/><rect x="10.5" y="11.5" width="4" height="5" fill="#f6e88a"/><rect x="15.8" y="16" width="1.2" height="5" fill="#e3c84a"/></svg>
<span class="t" style="left:455.2px;top:403.35px;font-size:17px;letter-spacing:-0.151px;color:#1b1b1b;">Create Symbolic &amp;Link...</span>
<svg style="left:407.6px;top:430.49px;" width="18.6" height="18.6" viewBox="0 0 18.6 18.6" ><rect x="0.800" y="0.800" width="17" height="17" fill="#fff" stroke="#6c6c6c" stroke-width="1.600"/><path d="M3.500 9.300L7.800 13.800L14.800 4.500" stroke="#1c1c1c" stroke-width="3" fill="none"/></svg>
<svg style="left:426px;top:429.09px;" width="22" height="22" viewBox="0 0 22 22" ><path d="M4.5 0.8h6l3 3v7.5h-9z" fill="#f2f2f2" stroke="#9c9c9c" stroke-width="1"/><path d="M10.5 0.8v3h3" fill="#e4e4ee" stroke="#9c9c9c" stroke-width="0.8"/><path d="M7.5 3.2h6.5l3 3v8h-9.5z" fill="#fbfbfb" stroke="#9c9c9c" stroke-width="1"/><path d="M14.0 3.2v3h3" fill="#e4e4ee" stroke="#9c9c9c" stroke-width="0.8"/><path d="M10 8.2h4.5" stroke="#8c8c8c" stroke-width="1"/><path d="M10 10.799999999999999h4.5" stroke="#8c8c8c" stroke-width="1"/><text x="2.4" y="21.6" font-family="Liberation Sans,sans-serif" font-weight="bold" font-size="8.6" fill="#111" textLength="17.5" lengthAdjust="spacingAndGlyphs">abc</text></svg>
<span class="t" style="left:455.2px;top:428.69px;font-size:17px;letter-spacing:0.190px;color:#1b1b1b;">Copy &amp;Name</span>
<svg style="left:407.6px;top:455.83000000000004px;" width="18.6" height="18.6" viewBox="0 0 18.6 18.6" ><rect x="0.800" y="0.800" width="17" height="17" fill="#fff" stroke="#6c6c6c" stroke-width="1.600"/><path d="M3.500 9.300L7.800 13.800L14.800 4.500" stroke="#1c1c1c" stroke-width="3" fill="none"/></svg>
<svg style="left:426px;top:454.43px;" width="22" height="22" viewBox="0 0 22 22" ><path d="M4.5 0.8h6l3 3v7.5h-9z" fill="#f2f2f2" stroke="#9c9c9c" stroke-width="1"/><path d="M10.5 0.8v3h3" fill="#e4e4ee" stroke="#9c9c9c" stroke-width="0.8"/><path d="M7.5 3.2h6.5l3 3v8h-9.5z" fill="#fbfbfb" stroke="#9c9c9c" stroke-width="1"/><path d="M14.0 3.2v3h3" fill="#e4e4ee" stroke="#9c9c9c" stroke-width="0.8"/><path d="M10 8.2h4.5" stroke="#8c8c8c" stroke-width="1"/><path d="M10 10.799999999999999h4.5" stroke="#8c8c8c" stroke-width="1"/><text x="2.4" y="21.6" font-family="Liberation Sans,sans-serif" font-weight="bold" font-size="8.6" fill="#111" textLength="17" lengthAdjust="spacingAndGlyphs">a\b</text></svg>
<span class="t" style="left:455.2px;top:454.03px;font-size:17px;letter-spacing:0.028px;color:#1b1b1b;">Copy &amp;Path</span>
<svg style="left:407.6px;top:481.1700000000001px;" width="18.6" height="18.6" viewBox="0 0 18.6 18.6" ><rect x="0.800" y="0.800" width="17" height="17" fill="#fff" stroke="#6c6c6c" stroke-width="1.600"/><path d="M3.500 9.300L7.800 13.800L14.800 4.500" stroke="#1c1c1c" stroke-width="3" fill="none"/></svg>
<svg style="left:426px;top:479.77000000000004px;" width="22" height="22" viewBox="0 0 22 22" ><path d="M3 2h14l2 4h-18z" fill="#c9cbcb"/><rect x="1" y="6" width="18" height="4.5" fill="#3d4344"/><rect x="1" y="10.5" width="18" height="6.5" fill="#3ea94b"/><rect x="3" y="12.4" width="6" height="2.6" fill="#b9f0bf"/><rect x="14.5" y="7.3" width="2.4" height="1.6" fill="#7be07d"/><path d="M10.5 8.6h5.4l2.6 2.6v6.9h-8z" fill="#eef0f4" stroke="#8c8f96" stroke-width="1"/><path d="M15.9 8.6v2.6h2.6" fill="#e4e4ee" stroke="#8c8f96" stroke-width="0.8"/><path d="M13.3 11.2h6.2l2.8 2.8v7.7h-9z" fill="#fafbfd" stroke="#8c8f96" stroke-width="1"/><path d="M19.5 11.2v2.8h2.8" fill="#e4e4ee" stroke="#8c8f96" stroke-width="0.8"/><path d="M15.5 16.2h4.6" stroke="#80889a" stroke-width="1"/><path d="M15.5 18.599999999999998h4.6" stroke="#80889a" stroke-width="1"/></svg>
<span class="t" style="left:455.2px;top:479.37px;font-size:17px;letter-spacing:-0.155px;color:#1b1b1b;">Copy &amp;UNC Path</span>
<svg style="left:407.6px;top:506.51px;" width="18.6" height="18.6" viewBox="0 0 18.6 18.6" ><rect x="0.800" y="0.800" width="17" height="17" fill="#fff" stroke="#6c6c6c" stroke-width="1.600"/><path d="M3.500 9.300L7.800 13.800L14.800 4.500" stroke="#1c1c1c" stroke-width="3" fill="none"/></svg>
<svg style="left:426px;top:505.10999999999996px;" width="22" height="22" viewBox="0 0 22 22" ><circle cx="7.800" cy="8" r="6.800" fill="#4aa5dc"/><path d="M3.500 4c2-1.500 4.500-1.600 5.500 0s-1.500 2.800-3.300 3.600-3.400 .4-3.400-1.200z" fill="#c6e8f8"/><path d="M2 9.500c1.500 .2 3.500 1.500 4.500 3s-.5 2.300-1.500 2c-1.800-.8-3-2.800-3-5z" fill="#bfe6f6"/><path d="M10 2.500c1.500 .5 3 1.800 3.500 3.500l-2.500 .5z" fill="#8fcdf0"/><path d="M9.5 8.6h5.4l2.6 2.6v6.9h-8z" fill="#eef0f4" stroke="#8c8f96" stroke-width="1"/><path d="M14.9 8.6v2.6h2.6" fill="#e4e4ee" stroke="#8c8f96" stroke-width="0.8"/><path d="M12.3 11.2h6.2l2.8 2.8v7.7h-9z" fill="#fafbfd" stroke="#8c8f96" stroke-width="1"/><path d="M18.5 11.2v2.8h2.8" fill="#e4e4ee" stroke="#8c8f96" stroke-width="0.8"/><path d="M14.5 16.2h4.6" stroke="#80889a" stroke-width="1"/><path d="M14.5 18.599999999999998h4.6" stroke="#80889a" stroke-width="1"/></svg>
<span class="t" style="left:455.2px;top:504.71px;font-size:17px;letter-spacing:-0.005px;color:#1b1b1b;">Copy &amp;Internet Path</span>
<svg style="left:407.6px;top:531.85px;" width="18.6" height="18.6" viewBox="0 0 18.6 18.6" ><rect x="0.800" y="0.800" width="17" height="17" fill="#fff" stroke="#6c6c6c" stroke-width="1.600"/><path d="M3.500 9.300L7.800 13.800L14.800 4.500" stroke="#1c1c1c" stroke-width="3" fill="none"/></svg>
<svg style="left:426px;top:530.45px;" width="22" height="22" viewBox="0 0 22 22" ><rect x="3" y="0.5" width="17" height="21.5" fill="#fbdb7b"/><rect x="17" y="13.83" width="1.4" height="8.17" fill="#f3c85a"/><rect x="3" y="0.5" width="17" height="1" fill="#f6cf63"/><rect x="7" y="0.8" width="14" height="10.5" fill="#f6f6fa" stroke="#8a8a8a" stroke-width="1.1"/><rect x="7" y="0.8" width="14" height="1.6" fill="#8a8a8a"/><path d="M9.500 6l1.300 1.500 2.200-3" stroke="#5b6fd0" stroke-width="1.2" fill="none"/><path d="M16 6.500l1 1 1.600-2" stroke="#9aa6d8" stroke-width="1" fill="none"/></svg>
<span class="t" style="left:455.2px;top:530.05px;font-size:17px;letter-spacing:0.350px;color:#1b1b1b;">&amp;Attributes</span>
<svg style="left:407.6px;top:557.19px;" width="18.6" height="18.6" viewBox="0 0 18.6 18.6" ><rect x="0.800" y="0.800" width="17" height="17" fill="#fff" stroke="#6c6c6c" stroke-width="1.600"/><path d="M3.500 9.300L7.800 13.800L14.800 4.500" stroke="#1c1c1c" stroke-width="3" fill="none"/></svg>
<svg style="left:426px;top:555.7900000000001px;" width="22" height="22" viewBox="0 0 22 22" ><path d="M3.2 0.8h10.5l4 4v16h-14.5z" fill="#fafafa" stroke="#8f8f8f" stroke-width="1"/><path d="M13.7 0.8v4h4" fill="#e4e4ee" stroke="#8f8f8f" stroke-width="0.8"/><circle cx="14.2" cy="14.5" r="6.9" fill="#e9e9e9" stroke="#8a8a8a" stroke-width="1.5"/><circle cx="14.2" cy="14.5" r="4.8" fill="#f7f7f7"/><path d="M14.2 14.8l2.600-3.200M14.2 14.800l-2-1.500" stroke="#555" stroke-width="1" fill="none"/><path d="M14.2 10.200v1M14.2 18v1M9.900 14.500h1M17.500 14.500h1" stroke="#777" stroke-width=".8"/></svg>
<span class="t" style="left:455.2px;top:555.39px;font-size:17px;letter-spacing:-0.062px;color:#1b1b1b;">Change &amp;Time...</span>
<svg style="left:407.6px;top:582.53px;" width="18.6" height="18.6" viewBox="0 0 18.6 18.6" ><rect x="0.800" y="0.800" width="17" height="17" fill="#fff" stroke="#6c6c6c" stroke-width="1.600"/><path d="M3.500 9.300L7.800 13.800L14.800 4.500" stroke="#1c1c1c" stroke-width="3" fill="none"/></svg>
<svg style="left:426px;top:581.13px;" width="22" height="22" viewBox="0 0 22 22" ><rect x="0.700" y="2.300" width="20.600" height="16.600" fill="#f4f6f7" stroke="#7d7d7d" stroke-width="1.400"/><rect x="0.700" y="2.300" width="20.600" height="1.500" fill="#7d7d7d"/><circle cx="8.300" cy="9" r="3.500" fill="none" stroke="#8fa0a8" stroke-width="1.100" stroke-dasharray="1.3 .7"/><circle cx="8.300" cy="9" r="1.300" fill="none" stroke="#8fa0a8" stroke-width=".9"/><circle cx="14.400" cy="12.200" r="2.900" fill="none" stroke="#8fa0a8" stroke-width="1.100" stroke-dasharray="1.2 .7"/><circle cx="14.400" cy="12.200" r="1" fill="none" stroke="#8fa0a8" stroke-width=".8"/></svg>
<span class="t" style="left:455.2px;top:580.73px;font-size:17px;letter-spacing:-0.450px;color:#1b1b1b;">&amp;Register DLL</span>
<svg style="left:407.6px;top:607.87px;" width="18.6" height="18.6" viewBox="0 0 18.6 18.6" ><rect x="0.800" y="0.800" width="17" height="17" fill="#fff" stroke="#6c6c6c" stroke-width="1.600"/><path d="M3.500 9.300L7.800 13.800L14.800 4.500" stroke="#1c1c1c" stroke-width="3" fill="none"/></svg>
<svg style="left:426px;top:606.47px;" width="22" height="22" viewBox="0 0 22 22" ><rect x="0.700" y="2.300" width="20.600" height="16.600" fill="#f4f6f7" stroke="#7d7d7d" stroke-width="1.400"/><rect x="0.700" y="2.300" width="20.600" height="1.500" fill="#7d7d7d"/><circle cx="8.300" cy="9" r="3.500" fill="none" stroke="#8fa0a8" stroke-width="1.100" stroke-dasharray="1.3 .7"/><circle cx="8.300" cy="9" r="1.300" fill="none" stroke="#8fa0a8" stroke-width=".9"/><path d="M13.200000000000001 13.700000000000001L20.400000000000002 20.900000000000002M20.400000000000002 13.700000000000001L13.200000000000001 20.900000000000002" stroke="#d3162b" stroke-width="2.6" fill="none"/></svg>
<span class="t" style="left:455.2px;top:606.07px;font-size:17px;letter-spacing:-0.265px;color:#1b1b1b;">&amp;Unregister DLL</span>
<svg style="left:407.6px;top:633.21px;" width="18.6" height="18.6" viewBox="0 0 18.6 18.6" ><rect x="0.800" y="0.800" width="17" height="17" fill="#fff" stroke="#6c6c6c" stroke-width="1.600"/><path d="M3.500 9.300L7.800 13.800L14.800 4.500" stroke="#1c1c1c" stroke-width="3" fill="none"/></svg>
<svg style="left:426px;top:631.8100000000001px;" width="22" height="22" viewBox="0 0 22 22" ><path d="M3.2 0.8h10.5l4 4v16h-14.5z" fill="#fafafa" stroke="#8f8f8f" stroke-width="1"/><path d="M13.7 0.8v4h4" fill="#e4e4ee" stroke="#8f8f8f" stroke-width="0.8"/><path d="M2.500 20.500l4.500-4.500" stroke="#9a9a9a" stroke-width="2"/><circle cx="10.300" cy="12.400" r="4.500" fill="#bfe6f2" stroke="#9bbfcc" stroke-width="1.200"/></svg>
<span class="t" style="left:455.2px;top:631.41px;font-size:17px;letter-spacing:-0.288px;color:#1b1b1b;">&amp;Find and Replace...</span>
<svg style="left:407.6px;top:658.5500000000001px;" width="18.6" height="18.6" viewBox="0 0 18.6 18.6" ><rect x="0.800" y="0.800" width="17" height="17" fill="#fff" stroke="#6c6c6c" stroke-width="1.600"/><path d="M3.500 9.300L7.800 13.800L14.800 4.500" stroke="#1c1c1c" stroke-width="3" fill="none"/></svg>
<svg style="left:426px;top:657.1500000000001px;" width="22" height="22" viewBox="0 0 22 22" ><rect x="0.600" y="7" width="20.800" height="8" fill="#fdfdfd" stroke="#9e9e9e" stroke-width="1.100"/><rect x="2.400" y="8.400" width="12" height="5.200" fill="#d4eefb"/><rect x="3.600" y="9.600" width="8.600" height="2.800" fill="#2e83d0"/><path d="M17.200 1.500v19M14.200 1.500h6M14.200 20.500h6" stroke="#7e7e7e" stroke-width="1.500" fill="none"/></svg>
<span class="t" style="left:455.2px;top:656.75px;font-size:17px;letter-spacing:-0.191px;color:#1b1b1b;">Advanced &amp;Renamer...</span>
<svg style="left:407.6px;top:683.89px;" width="18.6" height="18.6" viewBox="0 0 18.6 18.6" ><rect x="0.800" y="0.800" width="17" height="17" fill="#fff" stroke="#6c6c6c" stroke-width="1.600"/><path d="M3.500 9.300L7.800 13.800L14.800 4.500" stroke="#1c1c1c" stroke-width="3" fill="none"/></svg>
<svg style="left:426px;top:682.49px;" width="22" height="22" viewBox="0 0 22 22" ><rect x="3" y="0.5" width="17" height="21.5" fill="#fbdb7b"/><rect x="17" y="13.83" width="1.4" height="8.17" fill="#f3c85a"/><rect x="3" y="0.5" width="17" height="1" fill="#f6cf63"/><rect x="9.500" y="2.200" width="11.400" height="11.400" fill="#8e8e8e"/><rect x="10.800" y="3.500" width="3.900" height="3.900" fill="#fdfdf2"/><rect x="15.800" y="3.500" width="3.900" height="3.900" fill="#fdfdf2"/><rect x="10.800" y="8.500" width="3.900" height="3.900" fill="#fdfdf2"/><rect x="15.800" y="8.500" width="3.900" height="3.900" fill="#fdfdf2"/><circle cx="12.750" cy="5.450" r=".7" fill="#e6c64a"/><circle cx="17.750" cy="5.450" r=".7" fill="#e6c64a"/><circle cx="12.750" cy="10.450" r=".7" fill="#e6c64a"/><circle cx="17.750" cy="10.450" r=".7" fill="#e6c64a"/></svg>
<span class="t" style="left:455.2px;top:682.09px;font-size:17px;letter-spacing:-0.108px;color:#1b1b1b;">Change &amp;Icon...</span>
<svg style="left:407.6px;top:709.23px;" width="18.6" height="18.6" viewBox="0 0 18.6 18.6" ><rect x="0.800" y="0.800" width="17" height="17" fill="#fff" stroke="#6c6c6c" stroke-width="1.600"/><path d="M3.500 9.300L7.800 13.800L14.800 4.500" stroke="#1c1c1c" stroke-width="3" fill="none"/></svg>
<svg style="left:426px;top:707.83px;" width="22" height="22" viewBox="0 0 22 22" ><path d="M3.2 0.8h10.5l4 4v16h-14.5z" fill="#fcfcfc" stroke="#9a9a9a" stroke-width="1"/><path d="M13.7 0.8v4h4" fill="#e4e4ee" stroke="#9a9a9a" stroke-width="0.8"/><path d="M13.100000000000001 13.100000000000001L20.5 20.5M20.5 13.100000000000001L13.100000000000001 20.5" stroke="#d3162b" stroke-width="2.7" fill="none"/></svg>
<span class="t" style="left:455.2px;top:707.43px;font-size:17px;letter-spacing:-0.178px;color:#1b1b1b;">Advanced &amp;Delete...</span>
<svg style="left:407.6px;top:734.57px;" width="18.6" height="18.6" viewBox="0 0 18.6 18.6" ><rect x="0.800" y="0.800" width="17" height="17" fill="#fff" stroke="#6c6c6c" stroke-width="1.600"/><path d="M3.500 9.300L7.800 13.800L14.800 4.500" stroke="#1c1c1c" stroke-width="3" fill="none"/></svg>
<svg style="left:426px;top:733.1700000000001px;" width="22" height="22" viewBox="0 0 22 22" ><path d="M4 0.5h10.5l3.5 3.5v5.5h-14z" fill="#f6f6f6" stroke="#c4c4c4" stroke-width="1"/><path d="M14.5 0.5v3.5h3.5" fill="#e4e4ee" stroke="#c4c4c4" stroke-width="0.8"/><rect x="0.800" y="8" width="20.600" height="3.800" fill="#2f82cc"/><rect x="2.6" y="12" width="1.300" height="9.5" fill="#c6d0dc"/><rect x="5.35" y="12" width="1.300" height="8.5" fill="#c6d0dc"/><rect x="8.1" y="12" width="1.300" height="9.5" fill="#c6d0dc"/><rect x="10.85" y="12" width="1.300" height="8.5" fill="#c6d0dc"/><rect x="13.6" y="12" width="1.300" height="9.5" fill="#c6d0dc"/><rect x="16.35" y="12" width="1.300" height="8.5" fill="#c6d0dc"/><rect x="19.1" y="12" width="1.300" height="9.5" fill="#c6d0dc"/></svg>
<span class="t" style="left:455.2px;top:732.77px;font-size:17px;letter-spacing:-0.426px;color:#1b1b1b;">&amp;Shred Files...</span>
<svg style="left:407.6px;top:759.91px;" width="18.6" height="18.6" viewBox="0 0 18.6 18.6" ><rect x="0.800" y="0.800" width="17" height="17" fill="#fff" stroke="#6c6c6c" stroke-width="1.600"/><path d="M3.500 9.300L7.800 13.800L14.800 4.500" stroke="#1c1c1c" stroke-width="3" fill="none"/></svg>
<svg style="left:426px;top:758.51px;" width="22" height="22" viewBox="0 0 22 22" ><g transform="translate(11 11) scale(1.12) translate(-11 -11)"><path d="M2 9.800a8.600 8.600 0 0 1 14.800-5.300l2.700-2.700v8.200h-8.200l2.800-2.800a4.700 4.700 0 0 0-8 2.600z" fill="#2f8ad6"/><path d="M20 12.200a8.600 8.600 0 0 1-14.800 5.300l-2.700 2.700v-8.200h8.200l-2.800 2.800a4.700 4.700 0 0 0 8-2.600z" fill="#2f8ad6"/></g></svg>
<span class="t" style="left:455.2px;top:758.11px;font-size:17px;letter-spacing:-0.184px;color:#1b1b1b;">&amp;Synchronize...</span>
<svg style="left:407.6px;top:785.25px;" width="18.6" height="18.6" viewBox="0 0 18.6 18.6" ><rect x="0.800" y="0.800" width="17" height="17" fill="#fff" stroke="#6c6c6c" stroke-width="1.600"/><path d="M3.500 9.300L7.800 13.800L14.800 4.500" stroke="#1c1c1c" stroke-width="3" fill="none"/></svg>
<svg style="left:426px;top:783.85px;" width="22" height="22" viewBox="0 0 22 22" ><path d="M4.800 9v-3.500a4.400 4.400 0 0 1 8.800 0v3.500" fill="none" stroke="#ecd68a" stroke-width="2.600"/><rect x="0.800" y="8.400" width="16.400" height="10.400" rx="1" fill="#f0cf6a"/><rect x="0.800" y="8.400" width="16.400" height="4" fill="#f6e09a"/><path d="M13.700000000000001 13.6L20.900000000000002 20.8M20.900000000000002 13.6L13.700000000000001 20.8" stroke="#d3162b" stroke-width="2.5" fill="none"/></svg>
<span class="t" style="left:455.2px;top:783.45px;font-size:17px;letter-spacing:-0.239px;color:#1b1b1b;">Delete &amp;Locked File</span>
<svg style="left:407.6px;top:810.59px;" width="18.6" height="18.6" viewBox="0 0 18.6 18.6" ><rect x="0.800" y="0.800" width="17" height="17" fill="#fff" stroke="#6c6c6c" stroke-width="1.600"/><path d="M3.500 9.300L7.800 13.800L14.800 4.500" stroke="#1c1c1c" stroke-width="3" fill="none"/></svg>
<svg style="left:426px;top:809.19px;" width="22" height="22" viewBox="0 0 22 22" ><circle cx="11" cy="11" r="10.800" fill="#24a6e6"/><path d="M11.800 10.200v-10a10.800 10.800 0 0 1 10 10z" fill="#1c6fb8"/><path d="M11 11h10.800" stroke="#7fd0f5" stroke-width=".8"/><path d="M11 11l3.500-10" stroke="#7fd0f5" stroke-width=".6"/></svg>
<span class="t" style="left:455.2px;top:808.79px;font-size:17px;letter-spacing:-0.373px;color:#1b1b1b;">&amp;Size of Folders...</span>
<svg style="left:407.6px;top:835.93px;" width="18.6" height="18.6" viewBox="0 0 18.6 18.6" ><rect x="0.800" y="0.800" width="17" height="17" fill="#fff" stroke="#6c6c6c" stroke-width="1.600"/><path d="M3.500 9.300L7.800 13.800L14.800 4.500" stroke="#1c1c1c" stroke-width="3" fill="none"/></svg>
<svg style="left:426px;top:834.53px;" width="22" height="22" viewBox="0 0 22 22" ><rect x="0.700" y="4.700" width="20.600" height="12.600" fill="#fafbfd" stroke="#8d8d95" stroke-width="1.300"/><rect x="16.300" y="7" width="2.600" height="2.600" fill="#3a8cc8"/><path d="M2.800 7.800h4" stroke="#8da0c0" stroke-width="1"/><path d="M7 11.200h9M7 13.600h9" stroke="#9aa4b8" stroke-width="1"/></svg>
<span class="t" style="left:455.2px;top:834.13px;font-size:17px;letter-spacing:-0.062px;color:#1b1b1b;">Send to &amp;Mail Recipient</span>
<svg style="left:407.6px;top:861.27px;" width="18.6" height="18.6" viewBox="0 0 18.6 18.6" ><rect x="0.800" y="0.800" width="17" height="17" fill="#fff" stroke="#6c6c6c" stroke-width="1.600"/><path d="M3.500 9.300L7.800 13.800L14.800 4.500" stroke="#1c1c1c" stroke-width="3" fill="none"/></svg>
<svg style="left:426px;top:859.87px;" width="22" height="22" viewBox="0 0 22 22" ><path d="M1.2 0.8h7.1l3.4 3.4v9.6h-10.5z" fill="#fafafa" stroke="#8d8d8d" stroke-width="1"/><path d="M8.299999999999999 0.8v3.4h3.4" fill="#e4e4ee" stroke="#8d8d8d" stroke-width="0.8"/><path d="M8.8 7h7.9l3.6 3.6v9.9h-11.5z" fill="#fdfdfd" stroke="#8d8d8d" stroke-width="1"/><path d="M16.7 7v3.6h3.6" fill="#e4e4ee" stroke="#8d8d8d" stroke-width="0.8"/><path d="M8.800 17l3.600 3.800 8.600-9" stroke="#3aa845" stroke-width="2.300" fill="none"/></svg>
<span class="t" style="left:455.2px;top:859.47px;font-size:17px;letter-spacing:-0.195px;color:#1b1b1b;">Calculate and &amp;Verify Checksum...</span>
<svg style="left:407.6px;top:886.61px;" width="18.6" height="18.6" viewBox="0 0 18.6 18.6" ><rect x="0.800" y="0.800" width="17" height="17" fill="#fff" stroke="#6c6c6c" stroke-width="1.600"/><path d="M3.500 9.300L7.800 13.800L14.800 4.500" stroke="#1c1c1c" stroke-width="3" fill="none"/></svg>
<svg style="left:426px;top:885.21px;" width="22" height="22" viewBox="0 0 22 22" ><rect x="3" y="0.5" width="15" height="21" fill="#fbdb7b"/><rect x="15" y="13.52" width="1.4" height="7.98" fill="#f3c85a"/><rect x="3" y="0.5" width="15" height="1" fill="#f6cf63"/><path d="M11.7 11.8L20.7 20.8M20.7 11.8L11.7 20.8" stroke="#d3162b" stroke-width="3.2" fill="none"/></svg>
<span class="t" style="left:455.2px;top:884.81px;font-size:17px;letter-spacing:-0.265px;color:#1b1b1b;">Delete &amp;Empty Folders...</span>
<svg style="left:407.6px;top:911.95px;" width="18.6" height="18.6" viewBox="0 0 18.6 18.6" ><rect x="0.800" y="0.800" width="17" height="17" fill="#fff" stroke="#6c6c6c" stroke-width="1.600"/></svg>
<svg style="left:426px;top:910.5500000000001px;" width="22" height="22" viewBox="0 0 22 22" ><path d="M2.9000000000000004 3.700000000000001L18.1 18.9M18.1 3.700000000000001L2.9000000000000004 18.9" stroke="#d0112b" stroke-width="4.6" fill="none"/></svg>
<span class="t" style="left:455.2px;top:910.15px;font-size:17px;letter-spacing:-0.086px;color:#1b1b1b;">&amp;Delete Permanently</span>
<svg style="left:407.6px;top:937.29px;" width="18.6" height="18.6" viewBox="0 0 18.6 18.6" ><rect x="0.800" y="0.800" width="17" height="17" fill="#fff" stroke="#6c6c6c" stroke-width="1.600"/></svg>
<svg style="left:426px;top:935.89px;" width="22" height="22" viewBox="0 0 22 22" ><path d="M1 0.8h7.1l3.4 3.4v10.1h-10.5z" fill="#f6f6f8" stroke="#9a9a9a" stroke-width="1"/><path d="M8.1 0.8v3.4h3.4" fill="#e4e4ee" stroke="#9a9a9a" stroke-width="0.8"/><path d="M3 5.0h5" stroke="#b8bccb" stroke-width="1"/><path d="M3 7.5h5" stroke="#b8bccb" stroke-width="1"/><path d="M3 10.0h5" stroke="#b8bccb" stroke-width="1"/><path d="M8.5 7.5h7.9l3.6 3.6v9.9h-11.5z" fill="#fdfdfd" stroke="#8d8d8d" stroke-width="1"/><path d="M16.4 7.5v3.6h3.6" fill="#e4e4ee" stroke="#8d8d8d" stroke-width="0.8"/><path d="M11 13.0h6.5" stroke="#f0a030" stroke-width="1.4"/><path d="M11 15.3h6.5" stroke="#f0a030" stroke-width="1.4"/><path d="M11 17.6h6.5" stroke="#f0a030" stroke-width="1.4"/></svg>
<span class="t" style="left:455.2px;top:935.49px;font-size:17px;letter-spacing:0.208px;color:#1b1b1b;">&amp;Copy Content</span>
<svg style="left:407.6px;top:962.63px;" width="18.6" height="18.6" viewBox="0 0 18.6 18.6" ><rect x="0.800" y="0.800" width="17" height="17" fill="#fff" stroke="#6c6c6c" stroke-width="1.600"/></svg>
<svg style="left:426px;top:961.23px;" width="22" height="22" viewBox="0 0 22 22" ><rect x="1.300" y="2.300" width="17.400" height="19.400" rx="1.500" fill="#6b4a2c" stroke="#4a3018" stroke-width=".8"/><rect x="3.600" y="4" width="12.800" height="15.600" fill="#f6f8f8"/><path d="M3.6 6.5h12.8" stroke="#cfe0e4" stroke-width="1"/><path d="M3.6 8.8h12.8" stroke="#cfe0e4" stroke-width="1"/><path d="M3.6 11.1h12.8" stroke="#cfe0e4" stroke-width="1"/><path d="M3.6 13.399999999999999h12.8" stroke="#cfe0e4" stroke-width="1"/><path d="M3.6 15.7h12.8" stroke="#cfe0e4" stroke-width="1"/><path d="M3.6 18.0h12.8" stroke="#cfe0e4" stroke-width="1"/><rect x="6" y="1.200" width="8" height="3.400" rx="1" fill="#b5bdbd"/><ellipse cx="10" cy="1.200" rx="2.600" ry="1.100" fill="#555f60"/></svg>
<span class="t" style="left:455.2px;top:960.83px;font-size:17px;letter-spacing:-0.113px;color:#1b1b1b;">&amp;Paste Clipboard</span>
<svg style="left:407.6px;top:987.97px;" width="18.6" height="18.6" viewBox="0 0 18.6 18.6" ><rect x="0.800" y="0.800" width="17" height="17" fill="#fff" stroke="#6c6c6c" stroke-width="1.600"/><path d="M3.500 9.300L7.800 13.800L14.800 4.500" stroke="#1c1c1c" stroke-width="3" fill="none"/></svg>
<svg style="left:426px;top:986.57px;" width="22" height="22" viewBox="0 0 22 22" ><path d="M0.8 2.5h8.2l3 3v13.5h-11.2z" fill="#f2f4f2" stroke="#c2c2c2" stroke-width="1"/><path d="M9.0 2.5v3h3" fill="#e4e4ee" stroke="#c2c2c2" stroke-width="0.8"/><rect x="14" y="4.8" width="4.4" height="2.400" fill="#35506a"/><path d="M17.6 2.3l4.4 3.7l-4.4 3.7z" fill="#2d609f"/><rect x="14" y="14.0" width="4.4" height="2.400" fill="#35506a"/><path d="M17.6 11.5l4.4 3.7l-4.4 3.7z" fill="#2b689f"/></svg>
<span class="t" style="left:455.2px;top:986.17px;font-size:17px;letter-spacing:-0.164px;color:#1b1b1b;">&amp;Split File...</span>
<svg style="left:407.6px;top:1013.31px;" width="18.6" height="18.6" viewBox="0 0 18.6 18.6" ><rect x="0.800" y="0.800" width="17" height="17" fill="#fff" stroke="#6c6c6c" stroke-width="1.600"/><path d="M3.500 9.300L7.800 13.800L14.800 4.500" stroke="#1c1c1c" stroke-width="3" fill="none"/></svg>
<svg style="left:426px;top:1011.91px;" width="22" height="22" viewBox="0 0 22 22" ><rect x="0" y="4.8" width="4.4" height="2.400" fill="#2d5f96"/><path d="M3.6 2.3l4.4 3.7l-4.4 3.7z" fill="#2d669f"/><rect x="0" y="14.0" width="4.4" height="2.400" fill="#4a50a8"/><path d="M3.6 11.5l4.4 3.7l-4.4 3.7z" fill="#4450b0"/><path d="M10.2 2.5h8.5l3 3v13.5h-11.5z" fill="#f2f4f2" stroke="#c2c2c2" stroke-width="1"/><path d="M18.7 2.5v3h3" fill="#e4e4ee" stroke="#c2c2c2" stroke-width="0.8"/></svg>
<span class="t" style="left:455.2px;top:1011.51px;font-size:17px;letter-spacing:-0.266px;color:#1b1b1b;">&amp;Join Parts</span>
</body></html>
